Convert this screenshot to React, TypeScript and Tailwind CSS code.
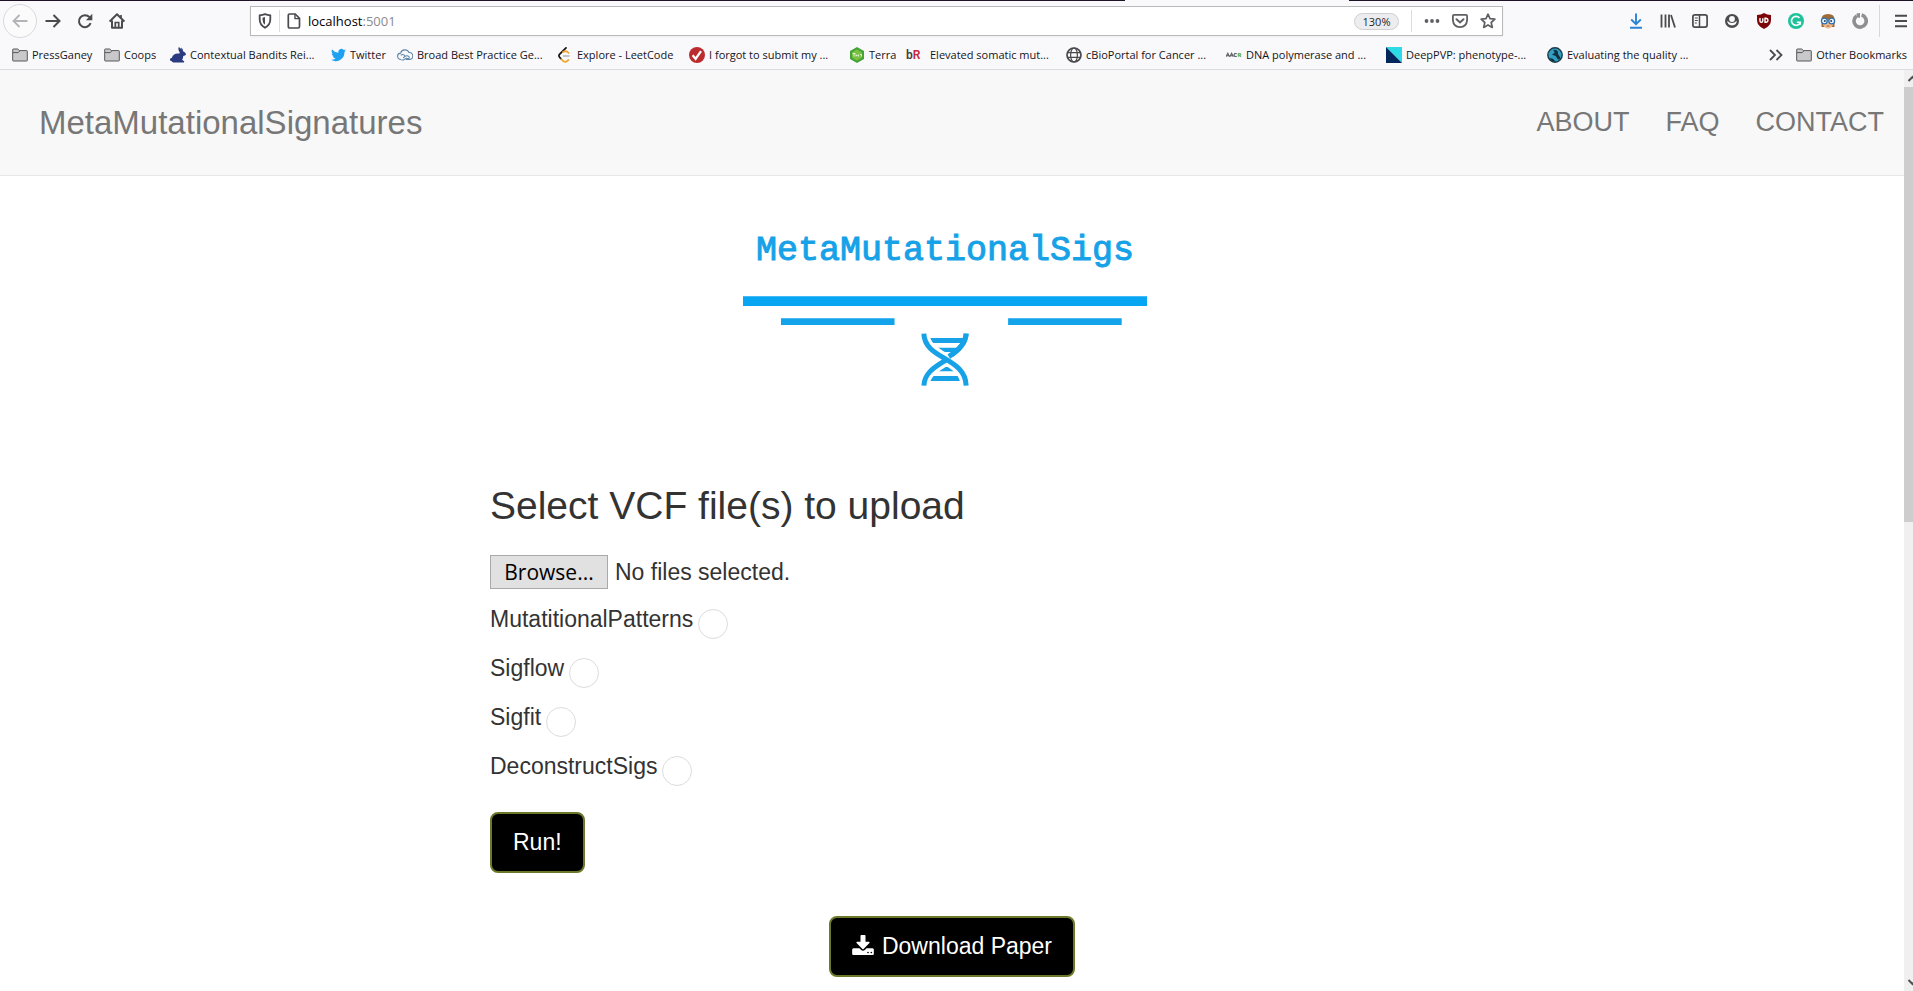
import React, { useRef } from 'react';

type IconProps = { children: React.ReactNode; box?: string; className?: string };

function Icon({ children, box = '0 0 16 16', className = 'size-4' }: IconProps) {
  return (
    <svg viewBox={box} className={`shrink-0 ${className}`} fill="none" aria-hidden="true">
      {children}
    </svg>
  );
}

const FolderIcon = () => (
  <Icon>
    <path d="M.7 13.4V2.6q0-.6.6-.6h4.4q.5 0 .8.5l.7 1.1h7.5q.6 0 .6.6v9.2q0 .6-.6.6H1.300q-.6 0-.6-.6z" fill="#c9c9cb" stroke="#58585c" />
    <path d="M1 5.600h5.300l1.300-1.500" stroke="#58585c" />
  </Icon>
);

const RabbitIcon = () => (
  <Icon>
    <path d="M8.600.2C10 .5 10.900 1.400 11.300 2.700c.1-.9 0-1.500-.2-2.200 1.300.8 1.900 2.100 1.900 3.700 1.500.5 2.700 1.600 3 3.100-.3 1-1.500 1.500-2.800 1.600.1 1.500-.3 2.800-1.100 3.900l2 1.500c.3.700 0 1.300-.7 1.300H4.200c-1.100 0-2-.5-2.400-1.300C.6 14.200 0 13.500 0 12.600c0-1 .8-1.700 1.800-1.600C2.500 8.300 4.800 6.600 7.500 6.600c.6 0 1.200.1 1.700.2.100-.6.300-1.100.6-1.600C8.600 4 8.100 2 8.600.2z" fill="#2b3b82" />
  </Icon>
);

const TwitterIcon = () => (
  <Icon box="0 0 24 24" className="h-4 w-[15px]">
    <path d="M24 4.600a10 10 0 0 1-2.800.8 5 5 0 0 0 2.200-2.700c-1 .6-2 1-3.100 1.200a4.900 4.900 0 0 0-8.400 4.500A14 14 0 0 1 1.700 3.200a4.900 4.900 0 0 0 1.500 6.500 5 5 0 0 1-2.200-.6v.1a4.900 4.900 0 0 0 3.900 4.800 5 5 0 0 1-2.200.1 4.900 4.900 0 0 0 4.600 3.400A10 10 0 0 1 0 19.500 14 14 0 0 0 21.500 7.100 10 10 0 0 0 24 4.600z" fill="#1da1f2" />
  </Icon>
);

const CloudIcon = () => (
  <Icon>
    <path d="M4 12.500a3.200 3.200 0 0 1-.4-6.400A4.500 4.500 0 0 1 12 5.500a3.500 3.500 0 0 1 .5 7H8.800M3.800 8.300c1-1.200 3.200-1 3.800.4.300 1.200-.5 2-1.600 2M8 9.300c2.200-1.200 4.400 0 4.300 1.600-.4 1.200-2 1-2.800.2L6.500 13H4.300" stroke="#5f86a8" strokeWidth="1.100" />
  </Icon>
);

const LeetIcon = () => (
  <Icon>
    <path d="M9 .9 2.700 7.200q-1.500 1.500 0 3.200l1.400 1.500" stroke="#151515" strokeWidth="1.700" strokeLinecap="round" />
    <path d="M4.300 12.100 6.500 14.300q1.700 1.200 3.500 0l1.400-1.400M6 5q2.200-1.800 4.200-.3l1.400 1.300" stroke="#f2a32a" strokeWidth="1.700" strokeLinecap="round" />
    <path d="M6.500 9H12" stroke="#b3b3b3" strokeWidth="1.500" strokeLinecap="round" />
  </Icon>
);

const CheckIcon = () => (
  <Icon>
    <circle cx="8" cy="8" r="8" fill="#bb2c2e" />
    <path d="m3.600 8.300 3 3.500L12 4.200" stroke="#fff" strokeWidth="2.300" />
  </Icon>
);

const TerraIcon = () => (
  <Icon>
    <path d="m8 0 7 4v8l-7 4-7-4V4z" fill="#45a437" />
    <path d="m8 2.500 4.800 2.800v5.400L8 13.500l-4.800-2.800V5.300z" fill="#7cc242" />
    <path d="M3.500 6.500h3M5 6.500v3M7 7.500v2M7 8.500h1.500M9.500 7.500v2M11 7.500h1.500v2" stroke="#e9f7df" strokeWidth=".9" />
  </Icon>
);

const BrIcon = () => (
  <span className="mr-1 w-4 shrink-0 font-['Roboto',sans-serif] text-xs leading-4 font-semibold text-neutral-700" aria-hidden="true">
    b<span className="text-[#c8253c]">R</span>
  </span>
);

const GlobeIcon = () => (
  <Icon>
    <circle cx="8" cy="8" r="7" stroke="#4a4a4d" strokeWidth="1.700" />
    <ellipse cx="8" cy="8" rx="3.400" ry="7" stroke="#4a4a4d" strokeWidth="1.200" />
    <path d="M1 5.700h14M1 10.300h14" stroke="#4a4a4d" strokeWidth="1.300" />
  </Icon>
);

const AacrIcon = () => (
  <Icon>
    <path d="m0 9.700 1.800-3.400L3.500 9.700M.8 8.700h2M3.800 9.700l1.800-3.400 1.700 3.400M4.600 8.700h2M11 6.900C9.500 6 8 6.700 8 8s1.500 2 3 1.100" stroke="#5c6064" strokeWidth="1.100" />
    <path d="M12.500 9.800V6.600h1.800q1 .9 0 1.800h-1.600l2.500 1.400" stroke="#66b36b" strokeWidth="1.100" />
  </Icon>
);

const DeepIcon = () => (
  <Icon>
    <path d="M0 0h16v16z" fill="#2bdbe6" />
    <path d="M0 0v16h16z" fill="#03265c" />
  </Icon>
);

const WrenchIcon = () => (
  <Icon>
    <circle cx="8" cy="8" r="7.200" fill="#2f9fc4" stroke="#1c3a47" strokeWidth="1.400" />
    <path d="M6 3.200q2-1 4 .3 1.600 1.400 1 3.400l2.200 3.500q.3 1.500-1.200 2-1 .2-1.600-.7L8.500 8.700q-2.300.2-3.500-1.600l2.200-.6.300-1.900z" fill="#12303c" />
    <path d="M2.500 11.500q3-1.500 6 3-4 .5-6-3z" fill="#12303c" />
  </Icon>
);

type Bookmark = { label: string; width: string; icon: React.ReactNode };

const bookmarks: Bookmark[] = [
  { label: 'PressGaney', width: 'w-[92px]', icon: <FolderIcon /> },
  { label: 'Coops', width: 'w-[66px]', icon: <FolderIcon /> },
  { label: 'Contextual Bandits Rei...', width: 'w-[161px]', icon: <RabbitIcon /> },
  { label: 'Twitter', width: 'w-[66px]', icon: <TwitterIcon /> },
  { label: 'Broad Best Practice Ge...', width: 'w-[160px]', icon: <CloudIcon /> },
  { label: 'Explore - LeetCode', width: 'w-[132px]', icon: <LeetIcon /> },
  { label: 'I forgot to submit my ...', width: 'w-[160px]', icon: <CheckIcon /> },
  { label: 'Terra', width: 'w-[57px]', icon: <TerraIcon /> },
  { label: 'Elevated somatic mut...', width: 'w-[160px]', icon: <BrIcon /> },
  { label: 'cBioPortal for Cancer ...', width: 'w-[160px]', icon: <GlobeIcon /> },
  { label: 'DNA polymerase and ...', width: 'w-[160px]', icon: <AacrIcon /> },
  { label: 'DeepPVP: phenotype-...', width: 'w-[161px]', icon: <DeepIcon /> },
  { label: 'Evaluating the quality ...', width: 'w-[161px]', icon: <WrenchIcon /> },
];

const ink = '#4a4a4f';

const toolbarActions: { label: string; icon: React.ReactNode }[] = [
  {
    label: 'Downloads',
    icon: (
      <Icon>
        <path d="M8 .5v10M3.200 6.500 8 11.200l4.800-4.700M2 14.800h12" stroke="#2b83d6" strokeWidth="1.900" />
      </Icon>
    ),
  },
  {
    label: 'Library',
    icon: (
      <Icon>
        <path d="M1.500 1.500v13M5.500 1.500v13M9 1.500v13M11 2l4 12.500" stroke={ink} strokeWidth="1.800" />
      </Icon>
    ),
  },
  {
    label: 'Sidebars',
    icon: (
      <Icon>
        <rect x=".9" y="1.900" width="14.200" height="12.200" rx="2" stroke={ink} strokeWidth="1.700" />
        <path d="M7.500 2v12" stroke={ink} strokeWidth="1.500" />
        <path d="M2.800 5h3M2.800 7.500h3M2.800 10h2" stroke={ink} />
      </Icon>
    ),
  },
  {
    label: 'Account',
    icon: (
      <Icon>
        <circle cx="8" cy="8" r="7" fill={ink} />
        <path d="M3.200 7.800Q3.500 12.300 8 12.400t4.800-4.600Q10.500 10 8 10T3.200 7.800z" fill="#f9f9fb" />
        <circle cx="8" cy="6" r="2.900" fill="#f9f9fb" />
      </Icon>
    ),
  },
  {
    label: 'uBlock',
    icon: (
      <Icon>
        <path d="M8 0q3 1.800 7 2v5q0 6-7 9-7-3-7-9V2q4-.2 7-2z" fill="#7d0609" />
        <path d="M4 5v3q0 1.300 1.300 1.300T6.800 8V5.200M9 5.300h1q2 .2 2 2t-2 2H9z" stroke="#fff" strokeWidth="1.400" />
      </Icon>
    ),
  },
  {
    label: 'Grammarly',
    icon: (
      <Icon>
        <circle cx="8" cy="8" r="8" fill="#1ec29a" />
        <path d="M11.500 5A4.500 4.500 0 1 0 12.300 9.200H8.800M12.300 9.200v2.600" stroke="#fff" strokeWidth="1.600" />
      </Icon>
    ),
  },
  {
    label: 'Reader assistant',
    icon: (
      <Icon>
        <path d="M1.500 7Q1 1 8 1t6.500 6v7h-13z" fill="#a06c34" />
        <path d="M3 6.500h10v5Q11.500 15.500 8 15.500T3 11.500z" fill="#f1bd8e" />
        <circle cx="4.300" cy="8" r="2.900" fill="#e8f4ff" stroke="#2f6ea9" strokeWidth="1.300" />
        <circle cx="11.700" cy="8" r="2.900" fill="#e8f4ff" stroke="#2f6ea9" strokeWidth="1.300" />
        <circle cx="4.800" cy="8" r="1" fill="#24476b" />
        <circle cx="11.200" cy="8" r="1" fill="#24476b" />
        <path d="M6.500 13h3" stroke="#b5562f" />
      </Icon>
    ),
  },
  {
    label: 'Ring extension',
    icon: (
      <Icon>
        <path d="M4.600 3a6.100 6.100 0 1 0 5-.9" stroke="#8f8f92" strokeWidth="3.600" />
        <path d="M4.500.5 8 0v5L4.500 4z" fill="#8f8f92" />
      </Icon>
    ),
  },
];

function Toolbar() {
  return (
    <div className="flex h-10 items-center pl-[3px]">
      <button aria-label="Back" className="grid size-[34px] place-items-center rounded-full border border-[#d9d9dc] bg-[#fbfbfc]">
        <Icon>
          <path d="M15.500 8H1.500M7.500 2 1.500 8l6 6" stroke="#b4b4b8" strokeWidth="1.800" />
        </Icon>
      </button>
      <button aria-label="Forward" className="grid h-8 w-8 place-items-center">
        <Icon>
          <path d="M.5 8h14M8.500 2l6 6-6 6" stroke={ink} strokeWidth="2" />
        </Icon>
      </button>
      <button aria-label="Reload" className="grid h-8 w-8 place-items-center">
        <Icon>
          <path d="M13.600 10.200A6 6 0 1 1 12.500 4.200" stroke={ink} strokeWidth="2" />
          <path d="M15.300.8v6.400H8.900z" fill={ink} />
        </Icon>
      </button>
      <button aria-label="Home" className="grid h-8 w-8 place-items-center">
        <Icon>
          <path d="M.6 8.500 8 1.300l7.400 7.200M3 7.500v7.300h10V7.500" stroke={ink} strokeWidth="2" strokeLinejoin="round" />
          <path d="M6.300 15V9.500h3.400V15M12 2v3" stroke={ink} strokeWidth="1.700" />
        </Icon>
      </button>

      <div className="mr-[117px] ml-[117px] flex h-[30px] min-w-0 flex-1 items-center border border-[#b9b9bb] bg-white shadow-xs">
        <Icon className="ml-[6px] size-4">
          <path d="M8 1.200q2.500 1 5.300 1.200v4.200q0 5.200-5.300 8.200-5.300-3-5.300-8.200V2.400Q5.500 2.200 8 1.200z" stroke={ink} strokeWidth="1.800" />
          <path d="M8 4v7.800Q5.500 10 5.500 6.500V4.700z" fill={ink} />
        </Icon>
        <span className="mr-[6px] ml-[6px] h-[22px] w-px bg-[#dcdcde]" />
        <Icon className="size-4">
          <path d="M3.700 1h5.500L13.500 5.300v8.300q0 1.400-1.400 1.400H3.700q-1.400 0-1.400-1.400V2.400Q2.300 1 3.700 1z" stroke={ink} strokeWidth="1.700" />
          <path d="M9 1v4.600h4.500" stroke={ink} strokeWidth="1.400" />
        </Icon>
        <div className="ml-[6px] flex min-w-0 flex-1 text-[13px] leading-5">
          <span className="text-black">localhost</span>
          <span className="text-[#8b8b8e]">:5001</span>
        </div>
        <button className="h-[17px] w-[45px] rounded-full border border-[#cfcfd1] bg-[#ededf0] text-[11px] leading-[15px] text-neutral-800">
          130%
        </button>
        <span className="ml-3 h-[22px] w-px bg-[#dcdcde]" />
        <button aria-label="Page actions" className="ml-[6px] grid size-7 place-items-center">
          <Icon>
            <circle cx="2.500" cy="8" r="1.900" fill="#606064" />
            <circle cx="8" cy="8" r="1.900" fill="#606064" />
            <circle cx="13.500" cy="8" r="1.900" fill="#606064" />
          </Icon>
        </button>
        <button aria-label="Save to Pocket" className="grid size-7 place-items-center">
          <Icon>
            <path d="M2 1.900h12q1.100 0 1.100 1.100v4.200Q14.500 14 8 14.200 1.500 14 .9 7.200V3Q.9 1.900 2 1.900z" stroke="#606064" strokeWidth="1.800" />
            <path d="M4.500 6.200 8 9.500l3.500-3.300" stroke="#606064" strokeWidth="2" strokeLinecap="round" />
          </Icon>
        </button>
        <button aria-label="Bookmark this page" className="grid size-7 place-items-center">
          <Icon>
            <path d="m8 1.200 2 4.500 4.900.5-3.700 3.300 1.100 4.900L8 11.900l-4.300 2.500 1.100-4.900L1.100 6.200 6 5.700z" stroke="#606064" strokeWidth="1.700" strokeLinejoin="round" />
          </Icon>
        </button>
      </div>

      {toolbarActions.map((action) => (
        <button key={action.label} aria-label={action.label} className="grid h-8 w-8 shrink-0 place-items-center">
          {action.icon}
        </button>
      ))}
      <span className="mr-[9px] ml-[3px] h-8 w-px bg-[#d8d8db]" />
      <button aria-label="Menu" className="grid h-8 w-6 place-items-center">
        <Icon>
          <path d="M2 2.800h12M2 8h12M2 13.200h12" stroke={ink} strokeWidth="2" />
        </Icon>
      </button>
    </div>
  );
}

function BookmarksBar() {
  return (
    <nav aria-label="Bookmarks" className="flex h-7 items-center pr-[6px] pl-3 text-[11px] leading-4 text-[#15141a]">
      {bookmarks.map((item) => (
        <a key={item.label} href="#" className={`flex shrink-0 items-center gap-1 whitespace-nowrap ${item.width}`}>
          {item.icon}
          {item.label}
        </a>
      ))}
      <button aria-label="More bookmarks" className="mr-3 ml-auto">
        <Icon>
          <path d="m2 3 5 5-5 5M8.500 3l5 5-5 5" stroke={ink} strokeWidth="1.800" />
        </Icon>
      </button>
      <a href="#" className="flex shrink-0 items-center gap-1 whitespace-nowrap">
        <FolderIcon />
        Other Bookmarks
      </a>
    </nav>
  );
}

function BrowserChrome() {
  return (
    <header className="border-b border-[#dcdce0] bg-[#f9f9fb] font-['Open_Sans','Noto_Sans',sans-serif]">
      <div className="flex h-px">
        <span className="flex-[1125] bg-[#1c1326]" />
        <span className="flex-[224] bg-[#f9f9fb]" />
        <span className="flex-[564] bg-[#1c1326]" />
      </div>
      <Toolbar />
      <BookmarksBar />
    </header>
  );
}

function SiteNav() {
  return (
    <nav className="flex h-[106px] items-center justify-between border-b border-[#e7e7e7] bg-[#f8f8f8] pr-5 pl-[39px] text-[#777]">
      <a href="#" className="text-[33px] leading-10">
        MetaMutationalSignatures
      </a>
      <div className="flex gap-9 pb-[2px] text-[27px] leading-8">
        <a href="#about">ABOUT</a>
        <a href="#faq">FAQ</a>
        <a href="#contact">CONTACT</a>
      </div>
    </nav>
  );
}

function Logo() {
  return (
    <div className="flex flex-col items-center pt-[55px] pr-[14px] text-[#17a2e8]">
      <div className="font-['Liberation_Mono',monospace] text-[35px] leading-10 [-webkit-text-stroke:1px_#17a2e8]">
        MetaMutationalSigs
      </div>
      <svg viewBox="70 258 1213 270" className="mt-[25px] h-[90px] w-[404px]" fill="none" aria-hidden="true">
        <path d="M70 259h1213v29H70z" fill="#08a5f2" />
        <path d="M184 325h341v20H184zM866 325h341v20H866z" fill="#12a3eb" />
        <g fill="currentColor">
          <path d="M630 384h108l-3 15h-95zM651 413h74l-9 13h-54zM672 471h42l14 13h-76zM641 498h95l3 15H630z" />
        </g>
        <path d="M740 371q-2 38-52 69" stroke="currentColor" strokeWidth="15" />
        <path d="M613 371c2 78 125 70 127 156" stroke="#fff" strokeWidth="34" />
        <path d="M740 371q-2 38-52 69" stroke="currentColor" strokeWidth="15" />
        <path d="M613 527c2-42 38-58 68-78" stroke="#fff" strokeWidth="34" />
        <path d="M613 371c2 78 125 70 127 156M613 527c2-42 38-58 68-78" stroke="currentColor" strokeWidth="15" />
      </svg>
    </div>
  );
}

const tools = ['MutatitionalPatterns', 'Sigflow', 'Sigfit', 'DeconstructSigs'];

const actionButton = 'rounded-lg border-2 border-[#6b7a2a] bg-black px-[21px] py-4 leading-[25px] text-white';

function UploadForm() {
  const picker = useRef<HTMLInputElement>(null);
  return (
    <form onSubmit={(event) => event.preventDefault()} className="mx-auto mt-[98px] w-full max-w-[924px]">
      <h2 className="text-[39px] leading-[44px]">Select VCF file(s) to upload</h2>
      <div className="mt-[27px] flex items-center gap-[7px] leading-[26px]">
        <button
          type="button"
          onClick={() => picker.current?.click()}
          className="h-[34px] w-[118px] border border-[#a9a9a9] bg-[#e1e1e1] font-['Open_Sans','Noto_Sans',sans-serif] text-[21px] leading-8 text-black"
        >
          Browse...
        </button>
        <input ref={picker} type="file" multiple hidden aria-label="VCF files" />
        <span>No files selected.</span>
      </div>
      <div className="mt-[17px]">
        {tools.map((tool) => (
          <div key={tool} className="flex h-[49px] items-start gap-[5px]">
            <label htmlFor={tool} className="leading-[26px]">
              {tool}
            </label>
            <input id={tool} type="radio" name={tool} className="mt-[3px] size-[30px] appearance-none rounded-full border border-[#dcdcdc] bg-white checked:bg-black" />
          </div>
        ))}
      </div>
      <button type="submit" className={`mt-[10px] ${actionButton}`}>
        Run!
      </button>
    </form>
  );
}

function DownloadPaper() {
  return (
    <div className="mt-[43px] flex justify-center pb-[12px]">
      <button className={`flex items-center gap-2 ${actionButton}`}>
        <svg viewBox="64 0 1664 1536" className="mb-1 h-5 w-[22px]" fill="currentColor" aria-hidden="true">
          <path d="M1344 1344q0-26-19-45t-45-19-45 19-19 45 19 45 45 19 45-19 19-45zm256 0q0-26-19-45t-45-19-45 19-19 45 19 45 45 19 45-19 19-45zm128-224v320q0 40-28 68t-68 28h-1472q-40 0-68-28t-28-68v-320q0-40 28-68t68-28h465l135 136q58 56 136 56t136-56l136-136h464q40 0 68 28t28 68zm-325-569q17 41-14 70l-448 448q-18 19-45 19t-45-19l-448-448q-31-29-14-70 17-39 59-39h256v-448q0-26 19-45t45-19h256q26 0 45 19t19 45v448h256q42 0 59 39z" />
        </svg>
        Download Paper
      </button>
    </div>
  );
}

function ScrollTrack() {
  return (
    <div className="flex w-[9px] shrink-0 flex-col overflow-hidden bg-[#f0f0f0]" aria-hidden="true">
      <Icon box="0 0 17 17" className="size-[17px]">
        <path d="m4.500 11 4-4 4 4" stroke="#505050" strokeWidth="2" />
      </Icon>
      <div className="flex flex-1 flex-col">
        <span className="flex-[435] bg-[#cdcdcd]" />
        <span className="flex-[452]" />
      </div>
      <Icon box="0 0 17 17" className="size-[17px]">
        <path d="m4.500 6 4 4 4-4" stroke="#505050" strokeWidth="2" />
      </Icon>
    </div>
  );
}

export default function App() {
  return (
    <div className="flex min-h-screen flex-col bg-white">
      <BrowserChrome />
      <div className="flex flex-1">
        <main className="min-w-0 flex-1 font-['Liberation_Sans',Arial,sans-serif] text-[23px] text-[#333]">
          <SiteNav />
          <Logo />
          <UploadForm />
          <DownloadPaper />
        </main>
        <ScrollTrack />
      </div>
    </div>
  );
}
